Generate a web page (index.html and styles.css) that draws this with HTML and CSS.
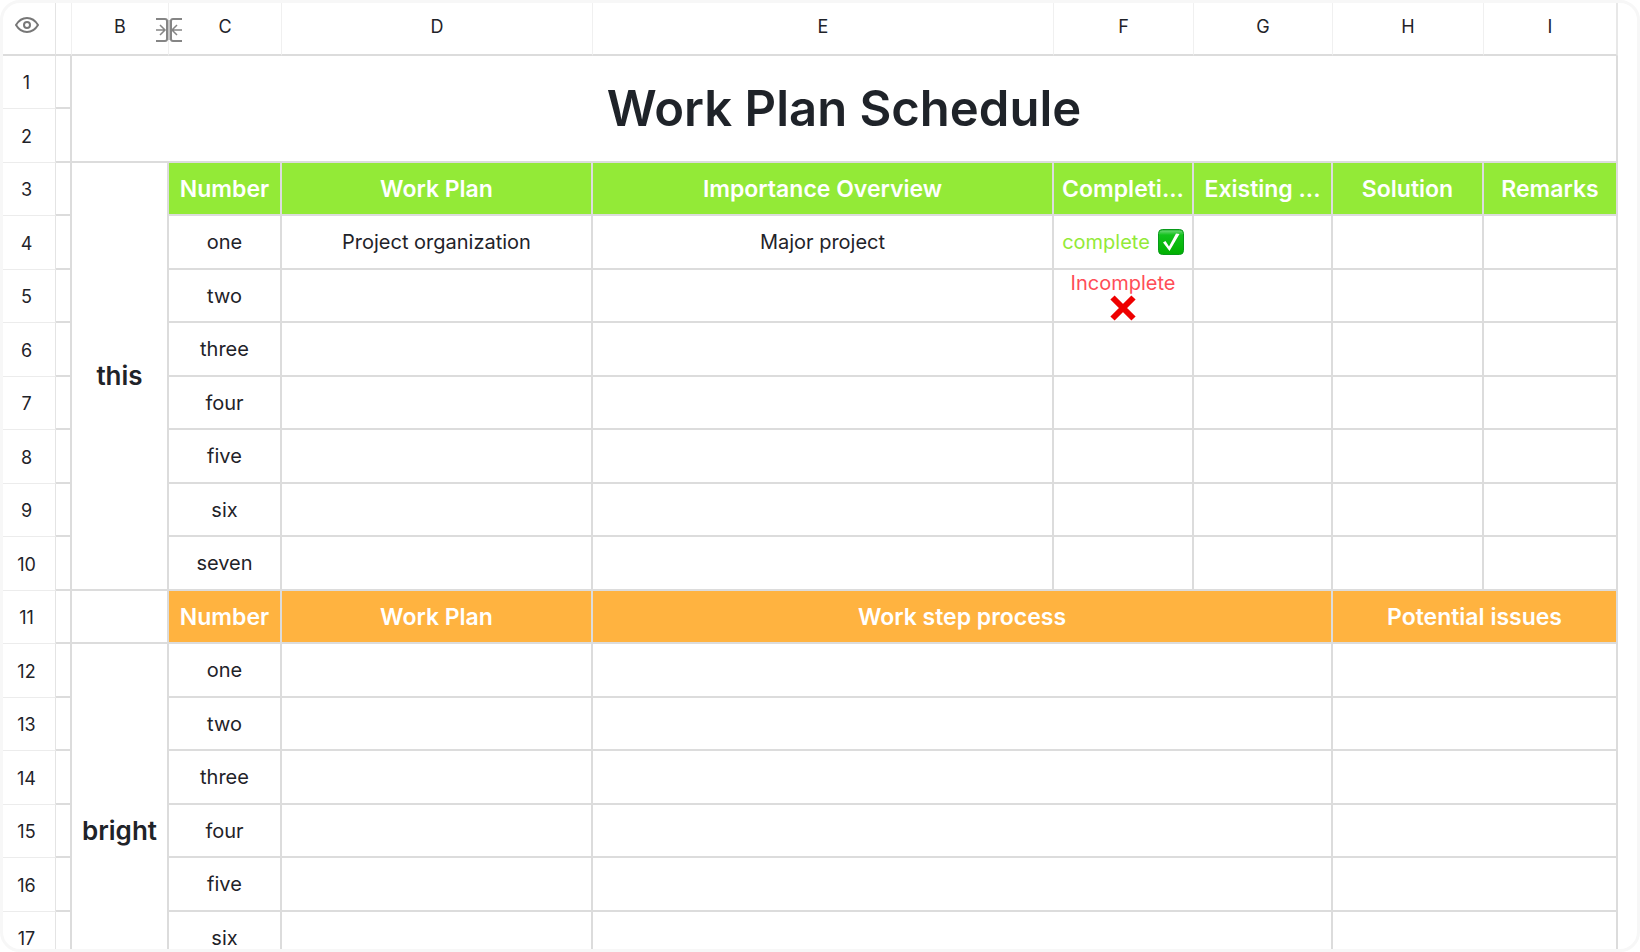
FILE: index.html
```html
<!DOCTYPE html>
<html lang="en">
<head>
    <meta charset="UTF-8">
    <meta name="viewport" content="width=device-width, initial-scale=1.0">
    <title>Work Plan Schedule</title>
    <link rel="stylesheet" href="styles.css">
</head>
<body>
    <div class="sheet-frame">
        <table class="sheet">
            <colgroup>
                <col class="col-index">
                <col class="col-a">
                <col class="col-b">
                <col class="col-c">
                <col class="col-d">
                <col class="col-e">
                <col class="col-f">
                <col class="col-g">
                <col class="col-h">
                <col class="col-i">
            </colgroup>
            <thead>
                <tr>
                    <th class="index">
                        <button type="button" class="eye-btn" aria-label="Show or hide">
                            <svg width="24" height="18" viewBox="0 0 24 18" fill="none" stroke="#777" stroke-width="2">
                                <path d="M1 9C4 4 8 2 12 2s8 2 11 7c-3 5-7 7-11 7S4 14 1 9z"/>
                                <circle cx="12" cy="9" r="3"/>
                            </svg>
                        </button>
                    </th>
                    <th></th>
                    <th class="letter-b">B
                        <button type="button" class="collapse-btn" aria-label="Hidden columns">
                            <svg width="26" height="26" viewBox="0 0 26 26" fill="none" stroke="#858585">
                                <path fill="#c4c4c4" stroke="none" d="M11 3h4v20h-4z"/>
                                <path stroke-width="2" d="M0 2h9q2 0 2 2v18q0 2-2 2H0M26 2h-9q-2 0-2 2v18q0 2 2 2h9"/>
                                <path stroke-width="1.5" d="M0 13h9M4 8l5 5-5 5M26 13h-9M21 8l-5 5 5 5"/>
                            </svg>
                        </button>
                    </th>
                    <th>C</th>
                    <th>D</th>
                    <th>E</th>
                    <th>F</th>
                    <th>G</th>
                    <th>H</th>
                    <th>I</th>
                </tr>
            </thead>
            <tbody>
                <tr><th class="index">1</th><td></td><td class="title" colspan="8" rowspan="2">Work Plan Schedule</td></tr>
                <tr><th class="index">2</th><td></td></tr>
                <tr class="head green">
                    <th class="index">3</th><td></td>
                    <td class="group" rowspan="8">this</td>
                    <th>Number</th>
                    <th>Work Plan</th>
                    <th>Importance Overview</th>
                    <th>Completi...</th>
                    <th>Existing ...</th>
                    <th>Solution</th>
                    <th>Remarks</th>
                </tr>
                <tr>
                    <th class="index">4</th><td></td>
                    <td>one</td>
                    <td>Project organization</td>
                    <td>Major project</td>
                    <td class="status done">
                        <div class="status-line">
                            complete
                            <svg width="26" height="26" viewBox="0 0 26 26">
                                <defs>
                                    <linearGradient id="tick" x1="0" y1="0" x2="0" y2="1">
                                        <stop offset="0" stop-color="#0a9c1c"/>
                                        <stop offset="0.06" stop-color="#5fd56a"/>
                                        <stop offset="0.22" stop-color="#12c21c"/>
                                        <stop offset="1" stop-color="#00b000"/>
                                    </linearGradient>
                                </defs>
                                <rect x="0.5" y="0.5" width="25" height="25" rx="4" fill="url(#tick)" stroke="#089a1a"/>
                                <path d="M5 13.5l2.5-1.5 3.5 5.5L18 4.500l3.500.5L11.500 22z" fill="#fff"/>
                            </svg>
                        </div>
                    </td>
                    <td></td><td></td><td></td>
                </tr>
                <tr>
                    <th class="index">5</th><td></td>
                    <td>two</td><td></td><td></td>
                    <td class="status failed">
                        <div class="status-stack">
                            Incomplete
                            <svg width="26" height="26" viewBox="0 0 26 26">
                                <path d="M2.500 2.500l21 21M23.500 2.500l-21 21" stroke="#ee0000" stroke-width="6"/>
                            </svg>
                        </div>
                    </td>
                    <td></td><td></td><td></td>
                </tr>
                <tr><th class="index">6</th><td></td><td>three</td><td></td><td></td><td></td><td></td><td></td><td></td></tr>
                <tr><th class="index">7</th><td></td><td>four</td><td></td><td></td><td></td><td></td><td></td><td></td></tr>
                <tr><th class="index">8</th><td></td><td>five</td><td></td><td></td><td></td><td></td><td></td><td></td></tr>
                <tr><th class="index">9</th><td></td><td>six</td><td></td><td></td><td></td><td></td><td></td><td></td></tr>
                <tr><th class="index">10</th><td></td><td>seven</td><td></td><td></td><td></td><td></td><td></td><td></td></tr>
                <tr class="head orange">
                    <th class="index">11</th><td></td><td></td>
                    <th>Number</th>
                    <th>Work Plan</th>
                    <th colspan="3">Work step process</th>
                    <th colspan="2">Potential issues</th>
                </tr>
                <tr><th class="index">12</th><td></td><td class="group" rowspan="7">bright</td><td>one</td><td></td><td colspan="3"></td><td colspan="2"></td></tr>
                <tr><th class="index">13</th><td></td><td>two</td><td></td><td colspan="3"></td><td colspan="2"></td></tr>
                <tr><th class="index">14</th><td></td><td>three</td><td></td><td colspan="3"></td><td colspan="2"></td></tr>
                <tr><th class="index">15</th><td></td><td>four</td><td></td><td colspan="3"></td><td colspan="2"></td></tr>
                <tr><th class="index">16</th><td></td><td>five</td><td></td><td colspan="3"></td><td colspan="2"></td></tr>
                <tr><th class="index">17</th><td></td><td>six</td><td></td><td colspan="3"></td><td colspan="2"></td></tr>
                <tr><th class="index"></th><td></td><td></td><td></td><td colspan="3"></td><td colspan="2"></td></tr>
            </tbody>
        </table>
    </div>
</body>
</html>
```

FILE: styles.css
```css
* {
    box-sizing: border-box;
}

body {
    margin: 0;
    background: #fff;
    color: #1f2329;
    font-family: Inter, "Liberation Sans", sans-serif;
    overflow: hidden;
}

.sheet-frame {
    height: 100vh;
    padding-right: 19px;
    border: 3px solid #f7f7f7;
    border-radius: 20px;
    overflow: hidden;
}

.sheet {
    width: 100%;
    table-layout: fixed;
    border-collapse: separate;
    border-spacing: 0;
}

/* column widths, E takes the rest */
.col-index { width: 53px; }
.col-a { width: 16px; }
.col-b { width: 97px; }
.col-c { width: 113px; }
.col-d { width: 311px; }
.col-f { width: 140px; }
.col-g { width: 139px; }
.col-h { width: 151px; }
.col-i { width: 134px; }

.sheet td,
.sheet th {
    padding: 0;
    border-right: 2px solid #dcdcdc;
    border-bottom: 2px solid #dcdcdc;
    font-size: 20px;
    line-height: 24px;
    font-weight: 400;
    text-align: center;
    vertical-align: middle;
    white-space: nowrap;
}

.sheet tbody tr {
    height: 53px;
}

/* rows alternate by one pixel */
.sheet tbody tr:nth-child(even) {
    height: 54px;
}

.sheet thead th {
    position: relative;
    height: 53px;
    padding-bottom: 4px;
    border-right: 1px solid #f0f0f0;
    font-size: 18px;
}

.sheet thead th:last-child {
    border-right: 2px solid #e8e8e8;
}

.sheet .index {
    padding: 2px 5px 0 0;
    border-right: 1px solid #e4e4e4;
    border-bottom: 1px solid #ececec;
    font-size: 18px;
}

.sheet thead .index {
    padding: 0 5px 2px 0;
    border-bottom: 2px solid #dcdcdc;
}

.sheet .title {
    font-size: 49px;
    line-height: 60px;
    font-weight: 600;
}

.sheet .group {
    font-size: 26px;
    line-height: 32px;
    font-weight: 600;
}

.head th:not(.index) {
    color: #fff;
    font-size: 23px;
    font-weight: 600;
}

.green th:not(.index) {
    background: #93ea37;
}

.orange th:not(.index) {
    background: #ffb340;
}

.done {
    color: #93ea37;
}

.failed {
    color: #ff4d57;
}

.status-line {
    display: flex;
    align-items: center;
    justify-content: center;
    gap: 8px;
}

.status-stack {
    display: flex;
    flex-direction: column;
    align-items: center;
}

.eye-btn,
.collapse-btn {
    padding: 0;
    border: none;
    background: none;
    cursor: pointer;
}

.eye-btn svg,
.collapse-btn svg {
    display: block;
    margin: auto;
}

/* sits over the line between B and C */
.collapse-btn {
    position: absolute;
    top: 14px;
    right: -14px;
    z-index: 1;
}
```
